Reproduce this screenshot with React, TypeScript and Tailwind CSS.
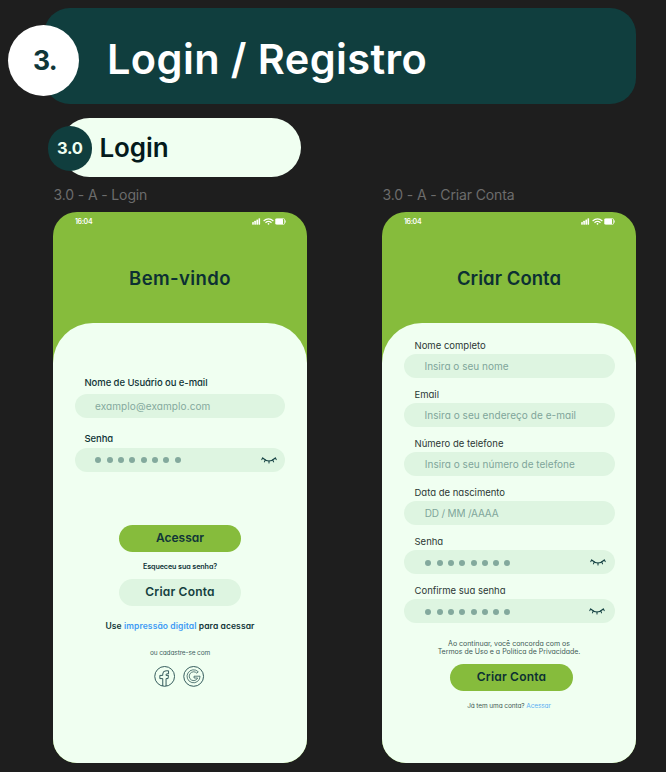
import type { ReactNode } from "react";

function StatusBar() {
  return (
    <div className="flex h-[18px] shrink-0 items-center justify-between pr-[21px] pl-[22px] text-white">
      <span className="text-[7px] leading-none font-semibold tracking-[-0.35px]">16:04</span>
      <div className="flex items-center gap-[1.5px]">
        <svg width="9" height="7" viewBox="0 0 9 7" fill="currentColor">
          <rect x="0.2" y="4" width="1.6" height="2.7" rx="0.4" />
          <rect x="2.3" y="2.8" width="1.6" height="3.9" rx="0.4" />
          <rect x="4.4" y="1.6" width="1.6" height="5.1" rx="0.4" />
          <rect x="6.5" y="0.3" width="1.6" height="6.4" rx="0.4" />
        </svg>
        <svg width="11" height="7" viewBox="0 0 11 7" fill="none" stroke="currentColor" strokeWidth="1.2">
          <path d="M0.6 3Q5.5 -1.4 10.4 3" />
          <path d="M2.5 4.7Q5.5 2.1 8.5 4.7" />
          <circle cx="5.5" cy="5.8" r="0.9" fill="currentColor" stroke="none" />
        </svg>
        <svg width="11" height="7" viewBox="0 0 11 7">
          <rect x="0.4" y="0.6" width="9.2" height="5.8" rx="1.2" fill="none" stroke="currentColor" strokeWidth="0.7" />
          <rect x="0.7" y="0.9" width="7.3" height="5.2" rx="0.6" fill="currentColor" />
          <path d="M10.4 2.4v2.2" stroke="currentColor" strokeWidth="0.7" />
        </svg>
      </div>
    </div>
  );
}

function ClosedEye({ className }: { className: string }) {
  return (
    <svg
      className={className}
      width="16"
      height="7"
      viewBox="0 0 16 7"
      fill="none"
      stroke="#164344"
      strokeWidth="1.05"
      strokeLinecap="round"
    >
      <path d="M1.6 1Q8 6.9 14.4 1" />
      <path d="M1.6 1L0.8 2.6M4.3 3L3.4 4.9M8 4V6M11.7 3L12.6 4.9M14.4 1L15.2 2.6" />
    </svg>
  );
}

function Dots({ className }: { className: string }) {
  return (
    <div className={`flex gap-[5.33px] ${className}`}>
      {Array.from({ length: 8 }, (_, i) => (
        <span key={i} className="size-[6px] rounded-full bg-[#83a99d]" />
      ))}
    </div>
  );
}

function Phone({ title, titleClass, children }: { title: string; titleClass: string; children: ReactNode }) {
  return (
    <section className="flex h-[550.5px] w-[254px] flex-col overflow-hidden rounded-[24px] bg-[#86bc3c]">
      <StatusBar />
      <h3
        className={`flex h-[92.5px] shrink-0 items-center justify-center pt-[4px] text-[18.5px] leading-none font-semibold text-[#0c3033] ${titleClass}`}
      >
        {title}
      </h3>
      <div className="flex flex-1 flex-col rounded-t-[40px] bg-[#f0fff1]">{children}</div>
    </section>
  );
}

function Field({ label, children }: { label: string; children: ReactNode }) {
  return (
    <div className="h-[49.1px]">
      <div className="flex h-[17px] items-center pl-[10.5px] text-[9.5px] leading-none text-[#2c3835]">{label}</div>
      <div className="flex h-[24px] items-center rounded-[12px] bg-[#def5e1] text-[10px] leading-none text-[#7fa59a]">
        {children}
      </div>
    </div>
  );
}

function LoginScreen() {
  return (
    <Phone title="Bem-vindo" titleClass="tracking-[0.4px]">
      <div className="mt-[49px] flex flex-col px-[22px] text-[9.5px] leading-none font-medium tracking-[-0.07px] text-[#0f3335]">
        <div className="flex h-[22.5px] items-start pt-[6px] pl-[9.5px]">Nome de Usuário ou e-mail</div>
        <div className="flex h-[24px] items-center rounded-[12px] bg-[#def5e1] pl-[20px] text-[10px] font-normal tracking-[0.1px] text-[#84a99d]">
          examplo@examplo.com
        </div>
        <div className="mt-[12px] flex h-[17.5px] items-center pl-[9.5px]">Senha</div>
        <div className="flex h-[24px] items-center justify-between rounded-[12px] bg-[#def5e1] pt-px pr-[8px] pl-[20.3px]">
          <Dots className="" />
          <ClosedEye className="" />
        </div>
      </div>
      <div className="mt-[53.5px] flex flex-col items-center leading-none text-[#103538]">
        <button className="h-[26.5px] w-[122.5px] rounded-full bg-[#86bc3c] text-[12px] leading-none font-semibold">
          Acessar
        </button>
        <p className="flex h-[27.5px] items-center pt-[2px] text-[7.2px] font-semibold tracking-[-0.1px]">
          Esqueceu sua senha?
        </p>
        <button className="h-[26.5px] w-[122.5px] rounded-full bg-[#def5e1] text-[12px] leading-none font-semibold tracking-[0.2px] text-[#14403f]">
          Criar Conta
        </button>
        <p className="mt-[15px] text-[8.5px] leading-[10px] font-semibold tracking-[0.1px] whitespace-pre">
          Use <span className="text-[#3f9bf5]">impressão digital</span> para acessar
        </p>
        <p className="mt-[18px] text-[6.5px] leading-[9px] tracking-[-0.12px] text-[#41605f]">ou cadastre-se com</p>
        <div className="mt-[8px] mr-[2px] flex gap-[8px]">
          <svg width="21.5" height="21" viewBox="0 0 21 21" fill="none" stroke="#2b5354" strokeWidth="0.95">
            <circle cx="10.4" cy="10.4" r="9.9" />
            <path d="M8.5 20V12.6H5.6V9.4H8.5V8Q8.5 4.8 11.8 4.8H14.3V7.8H12.8Q11.8 7.8 11.8 8.8V9.4H14.2L13.8 12.6H11.8V20" />
          </svg>
          <svg width="21.5" height="21" viewBox="0 0 21 21" fill="none" stroke="#2b5354">
            <circle cx="10.4" cy="10.4" r="9.9" strokeWidth="0.95" />
            <path d="M15 5.8A6.5 6.5 0 1 0 16.8 10.2H10.8V12H14.4A4.4 4.4 0 1 1 13.6 7.2Z" strokeWidth="0.75" />
          </svg>
        </div>
      </div>
    </Phone>
  );
}

function RegisterScreen() {
  return (
    <Phone title="Criar Conta" titleClass="tracking-[0.05px]">
      <div className="mt-[14.5px] pr-[21.5px] pl-[22px]">
        <Field label="Nome completo">
          <span className="pl-[20.5px]">Insira o seu nome</span>
        </Field>
        <Field label="Email">
          <span className="pl-[20.5px] tracking-[0.05px]">Insira o seu endereço de e-mail</span>
        </Field>
        <Field label="Número de telefone">
          <span className="pl-[20.8px] tracking-[0.02px]">Insira o seu número de telefone</span>
        </Field>
        <Field label="Data de nascimento">
          <span className="pl-[20.8px] tracking-[-0.18px]">DD / MM /AAAA</span>
        </Field>
        <Field label="Senha">
          <Dots className="pt-px pl-[21.2px]" />
          <ClosedEye className="mr-[8.5px] ml-auto" />
        </Field>
        <Field label="Confirme sua senha">
          <Dots className="pt-px pl-[21.2px]" />
          <ClosedEye className="mr-[10px] ml-auto" />
        </Field>
      </div>
      <div className="mt-[8.8px] flex flex-col items-center text-[#425a55]">
        <p className="text-center text-[7px] leading-[7.6px] whitespace-nowrap">
          Ao continuar, você concorda com os
          <br />
          Termos de Uso e a Política de Privacidade.
        </p>
        <button className="mt-[8.5px] ml-[5px] h-[26.5px] w-[122.5px] rounded-full bg-[#86bc3c] text-[12px] leading-none font-semibold tracking-[0.2px] text-[#0c3033]">
          Criar Conta
        </button>
        <p className="mt-[11.5px] text-[6.5px] leading-[9px] tracking-[-0.1px]">
          Já tem uma conta? <span className="text-[#5aaef2]">Acessar</span>
        </p>
      </div>
    </Phone>
  );
}

export default function App() {
  return (
    <main className="flex h-[772px] w-[666px] flex-col overflow-hidden bg-[#1e1e1e] pt-[8px] font-['Inter',sans-serif] [font-feature-settings:'cv11']">
      <header className="ml-[44px] flex h-[95.5px] w-[592px] items-center rounded-[26px] bg-[#103e3e] pt-[8.5px]">
        <div className="-ml-[36px] flex size-[71px] shrink-0 items-center justify-center rounded-full bg-white pl-[3px] text-[26.5px] leading-none font-bold tracking-[-0.8px] text-[#0f3638]">
          3.
        </div>
        <h1 className="ml-[28px] text-[41.5px] leading-none font-semibold tracking-[0.4px] text-white">
          Login / Registro
        </h1>
      </header>
      <div className="mt-[14px] ml-[60px] flex h-[59.5px] w-[240.5px] items-center rounded-full bg-[#f0fff1] pt-[2px]">
        <div className="-ml-[12.5px] flex size-[44.5px] shrink-0 items-center justify-center rounded-full bg-[#103e3e] text-[16.5px] leading-none font-bold tracking-[-0.3px] text-[#f0fff1]">
          3.0
        </div>
        <h2 className="ml-[7.5px] text-[26px] leading-none font-semibold tracking-[-0.1px] text-[#041a1b]">Login</h2>
      </div>
      <div className="flex gap-[75px] pl-[53px]">
        <div>
          <div className="flex h-[35px] items-center pl-[0.5px] text-[14px] leading-none tracking-[-0.13px] text-[#6c6c6c] [font-feature-settings:normal]">
            3.0 - A - Login
          </div>
          <LoginScreen />
        </div>
        <div>
          <div className="flex h-[35px] items-center pl-[0.5px] text-[14px] leading-none tracking-[-0.13px] text-[#6c6c6c] [font-feature-settings:normal]">
            3.0 - A - Criar Conta
          </div>
          <RegisterScreen />
        </div>
      </div>
    </main>
  );
}
